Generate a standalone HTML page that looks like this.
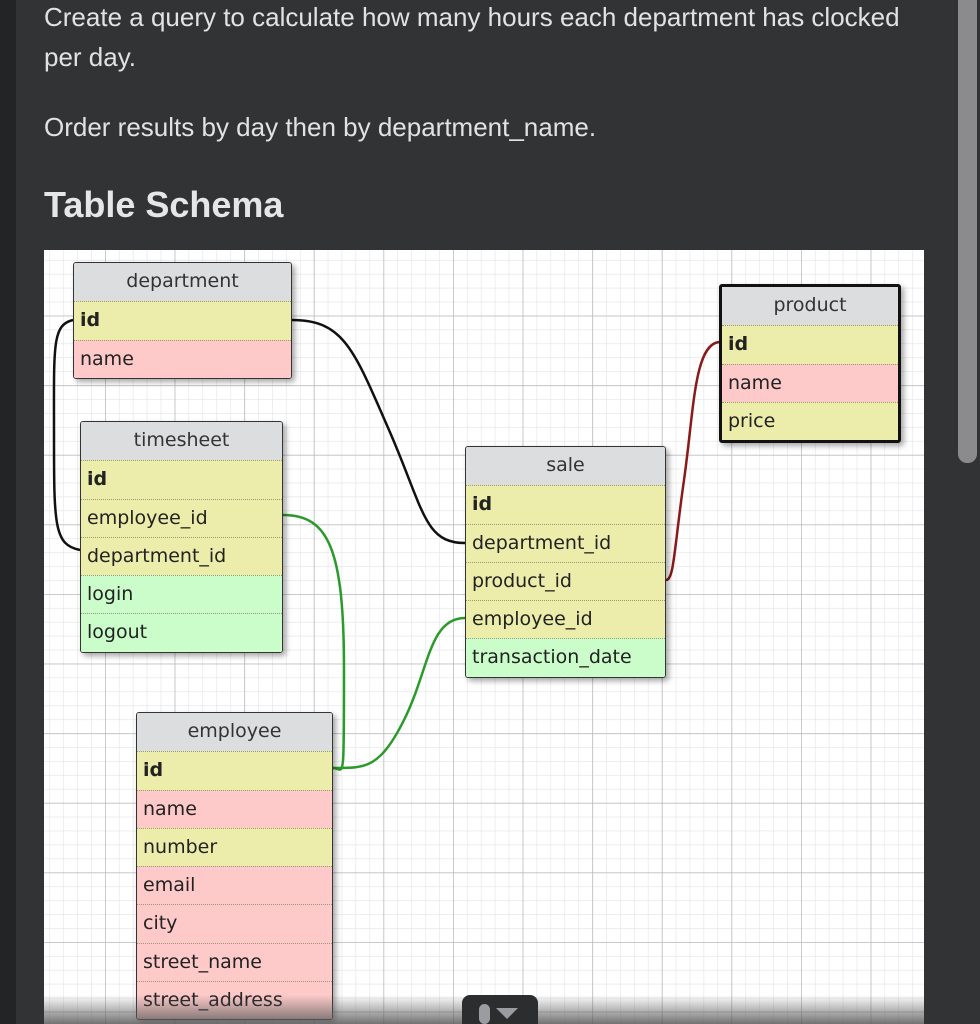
<!DOCTYPE html>
<html><head><style>
*{margin:0;padding:0;box-sizing:border-box}
body{width:980px;height:1024px;overflow:hidden;background:#323335;position:relative;font-family:"Liberation Sans",sans-serif}
.lstrip{position:absolute;left:0;top:0;width:16px;height:1024px;background:#232425}
.sb{position:absolute;left:958px;top:-10px;width:19px;height:473px;border-radius:9px;background:#8b8b8e}
p{position:absolute;left:44px;color:#e2e2e2;font-size:26px;line-height:40px}
h2{position:absolute;left:44px;top:184px;color:#e6e6e6;font-size:36px;font-weight:bold}
.img{position:absolute;left:44px;top:250px;width:880px;height:774px;background:#fff;overflow:hidden}
.t{position:absolute;border:1.5px solid #333;border-radius:3px;box-shadow:3px 3px 6px rgba(0,0,0,.35);font-family:"DejaVu Sans",sans-serif;font-size:19px;overflow:hidden}
.t div{height:38.3px;line-height:37px;padding-left:6px;border-top:1px dotted #9a9a70;color:#222}
.t .h{background:#dcdddf;text-align:center;padding:0;color:#333;border-top:none}
.y{background:#ededab}.r{background:#fdc9c9}.g{background:#cbfdcb}
.b{font-weight:bold}
.fade{position:absolute;left:0;top:745px;width:880px;height:29px;background:linear-gradient(rgba(120,120,120,0),rgba(90,90,90,.85))}
.btn{position:absolute;left:418px;top:745px;width:76px;height:40px;border-radius:8px;background:#2c2d2f}
</style></head><body>
<div class="lstrip"></div>
<p style="top:-3px">Create a query to calculate how many hours each department has clocked<br>per day.</p>
<p style="top:107px">Order results by day then by department_name.</p>
<h2>Table Schema</h2>
<div class="img">
<svg width="880" height="774" style="position:absolute;left:0;top:0">
<defs>
<pattern id="mi" x="-8.6" y="-4" width="13.92" height="13.92" patternUnits="userSpaceOnUse"><path d="M0 0V13.92M0 0H13.92" stroke="#e2e3e6" stroke-width="1.2" fill="none"/></pattern>
<pattern id="ma" x="-8.6" y="-4" width="69.6" height="69.6" patternUnits="userSpaceOnUse"><path d="M0 0V69.6M0 0H69.6" stroke="#b9babd" stroke-width="1.5" fill="none"/></pattern>
</defs>
<rect width="880" height="774" fill="url(#mi)"/>
<rect width="880" height="774" fill="url(#ma)"/>
<g fill="none" stroke-width="2.5">
<path d="M248 70 C300 70,310 100,345 180 S380 293,421 293" stroke="#111"/>
<path d="M29 70 C8 75,10 95,10 185 S10 295,36 300" stroke="#111"/>
<path d="M239 265 C285 265,300 300,300 420 S300 518,289 518" stroke="#2a9a2a"/>
<path d="M421 368 C385 368,385 420,360 470 S320 518,289 518" stroke="#2a9a2a"/>
<path d="M675 92 C650 95,650 160,640 230 S630 330,622 330" stroke="#8a1a1a"/>
</g>
</svg>
<div class="t" style="left:29px;top:12px;width:219px"><div class="h">department</div><div class="y b">id</div><div class="r">name</div></div>
<div class="t" style="left:675px;top:34px;width:182px;border:3px solid #111"><div class="h">product</div><div class="y b">id</div><div class="r">name</div><div class="y">price</div></div>
<div class="t" style="left:36px;top:171px;width:203px"><div class="h">timesheet</div><div class="y b">id</div><div class="y">employee_id</div><div class="y">department_id</div><div class="g">login</div><div class="g">logout</div></div>
<div class="t" style="left:421px;top:196px;width:201px"><div class="h">sale</div><div class="y b">id</div><div class="y">department_id</div><div class="y">product_id</div><div class="y">employee_id</div><div class="g">transaction_date</div></div>
<div class="t" style="left:92px;top:462px;width:197px"><div class="h">employee</div><div class="y b">id</div><div class="r">name</div><div class="y">number</div><div class="r">email</div><div class="r">city</div><div class="r">street_name</div><div class="r">street_address</div></div>
<div class="fade"></div>
<div class="btn"><svg width="76" height="30"><rect x="17" y="9" width="11" height="20" rx="5.5" fill="#9a9ca0"/><path d="M34 13H56L45 24Z" fill="#9a9ca0"/></svg></div>
</div>
<div class="sb"></div>
</body></html>
